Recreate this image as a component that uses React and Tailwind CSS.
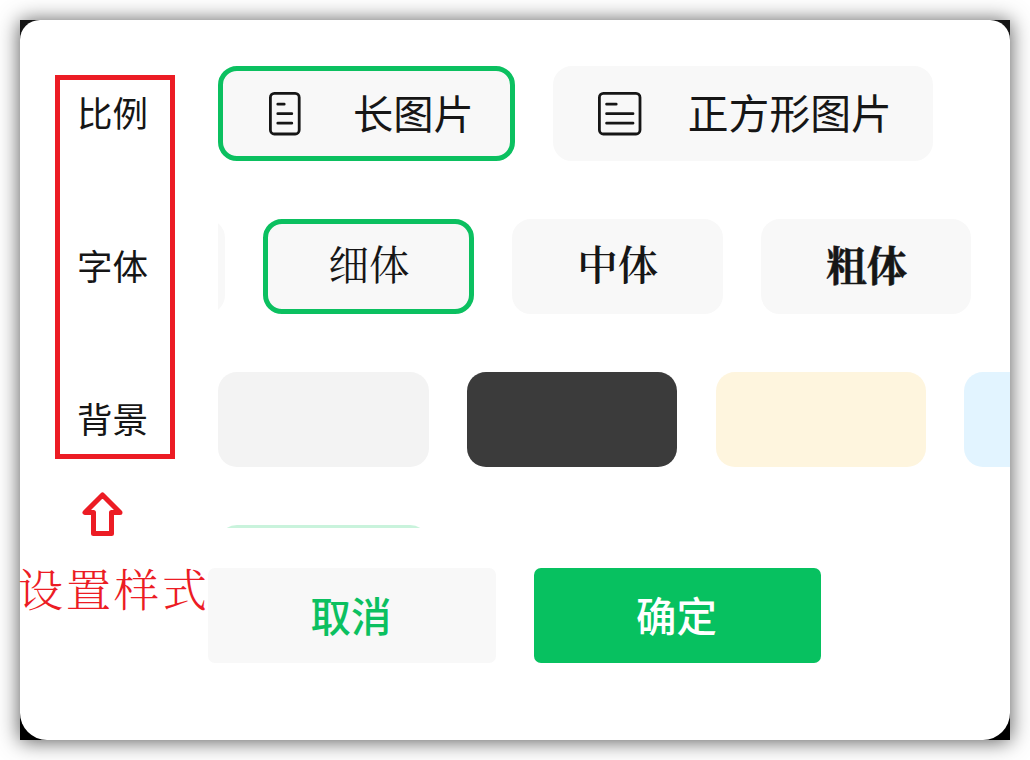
import React, { useState } from "react";
import clsx from "clsx";

const fonts = [
  { id: "thin", label: "细体", className: "font-normal" },
  { id: "medium", label: "中体", className: "font-semibold" },
  { id: "bold", label: "粗体", className: "pt-[2px] font-bold [-webkit-text-stroke:0.5px_#161616]" },
];

const backgrounds = [
  { id: "gray", className: "bg-[#f3f3f3]" },
  { id: "dark", className: "bg-[#3b3b3b]" },
  { id: "cream", className: "bg-[#fef5de]" },
  { id: "blue", className: "bg-[#e2f4ff]" },
];

const LongIcon = () => (
  <svg width="32" height="44" viewBox="0 0 32 44" fill="none" stroke="#161616" strokeWidth="2.8" strokeLinecap="round">
    <rect x="1.4" y="1.4" width="28.8" height="40.6" rx="4" />
    <path d="M8.8 12.2h6.4M8.8 21.7h14M8.8 31.2h14" />
  </svg>
);

const SquareIcon = () => (
  <svg width="44" height="44" viewBox="0 0 44 44" fill="none" stroke="#161616" strokeWidth="2.8" strokeLinecap="round">
    <rect x="1.4" y="1.4" width="40.6" height="40.6" rx="4" />
    <path d="M8.6 12.2h9.6M8.6 21.7h26.4M8.6 31.2h26.4" />
  </svg>
);

const Option = ({ active, onClick, className, children }) => (
  <button
    onClick={onClick}
    className={clsx(
      "flex h-[95px] shrink-0 items-center rounded-[19px] border-[5px] bg-[#f8f8f8]",
      active ? "border-[#0bc060]" : "border-[#f8f8f8]",
      className
    )}
  >
    {children}
  </button>
);

const Row = ({ label, children }) => (
  <div className="flex h-[95px] items-center">
    <div className="w-[141px] shrink-0 pb-1 text-[35.5px] leading-[48px]">{label}</div>
    <div className="flex min-w-0 flex-1 gap-[38.3px] overflow-hidden">{children}</div>
  </div>
);

const App = () => {
  const [ratio, setRatio] = useState("long");
  const [font, setFont] = useState("thin");

  return (
    <div className="h-[760px] w-[1030px] overflow-hidden bg-white p-5 font-['Noto_Sans_CJK_SC',sans-serif] text-[#161616]">
      <div className="relative h-[720px] w-[990px] bg-linear-to-b from-[#161616] to-black shadow-[0_1px_20px_rgba(0,0,0,0.68)]">
        <div className="h-full overflow-hidden rounded-t-[20px] rounded-b-[27px] bg-white pt-[46px]">
          <div className="flex h-[462px] flex-col gap-[58px] overflow-hidden pl-[57px]">
            <Row label="比例">
              <Option active={ratio === "long"} onClick={() => setRatio("long")} className="w-[296.5px] pl-[46px]">
                <LongIcon />
                <span className="ml-[52px] pb-[3px] text-[40.3px] leading-none">长图片</span>
              </Option>
              <Option active={ratio === "square"} onClick={() => setRatio("square")} className="w-[380px] pl-[40px]">
                <SquareIcon />
                <span className="ml-[46px] pb-[3px] text-[40.8px] leading-none">正方形图片</span>
              </Option>
            </Row>

            <Row label="字体">
              {/* default font, scrolled off to the left */}
              <Option className="-ml-[203.5px] w-[210.5px]" />
              {fonts.map((item) => (
                <Option
                  key={item.id}
                  active={font === item.id}
                  onClick={() => setFont(item.id)}
                  className="w-[210.5px] justify-center"
                >
                  <span
                    className={clsx(
                      "pb-[6px] pl-px font-['Noto_Serif_CJK_SC','Noto_Sans_CJK_SC',serif] text-[40.5px] leading-none",
                      item.className
                    )}
                  >
                    {item.label}
                  </span>
                </Option>
              ))}
            </Row>

            <Row label="背景">
              {backgrounds.map((item) => (
                <button
                  key={item.id}
                  className={clsx("h-[95px] w-[210.5px] shrink-0 rounded-[19px]", item.className)}
                />
              ))}
            </Row>

            <div className="ml-[141px] h-[95px] w-[210.5px] shrink-0 rounded-[19px] border-[3px] border-[#c9f3dc]" />
          </div>

          <div className="mt-10 ml-[188px] flex gap-[38px] text-[40.4px] font-medium">
            <button className="h-[95px] w-[288px] rounded-[7px] bg-[#f8f8f8] pr-[2px] pb-px text-[#0bc060]">取消</button>
            <button className="h-[95px] w-[287px] rounded-[7px] bg-[#07c160] pr-[2px] pb-px text-white">确定</button>
          </div>
        </div>

        {/* callout over the settings labels */}
        <div className="absolute top-[55px] left-[35px] h-[384px] w-[120px] border-[5px] border-[#ec1c24]" />
        <svg
          className="absolute top-[471px] left-[61px]"
          width="43"
          height="46"
          viewBox="0 0 43 46"
          fill="none"
          stroke="#ec1c24"
          strokeWidth="5"
          strokeLinejoin="round"
        >
          <path d="M21.5 4L4 21.5H12.5V42.5H30.5V21.5H39Z" />
        </svg>
        <div className="absolute top-[536px] left-[-2px] font-['Noto_Serif_CJK_SC','Noto_Sans_CJK_SC',serif] text-[45px] leading-[64px] font-light tracking-[3px] whitespace-nowrap text-[#ec1c24]">
          设置样式
        </div>
      </div>
    </div>
  );
};

export default App;
